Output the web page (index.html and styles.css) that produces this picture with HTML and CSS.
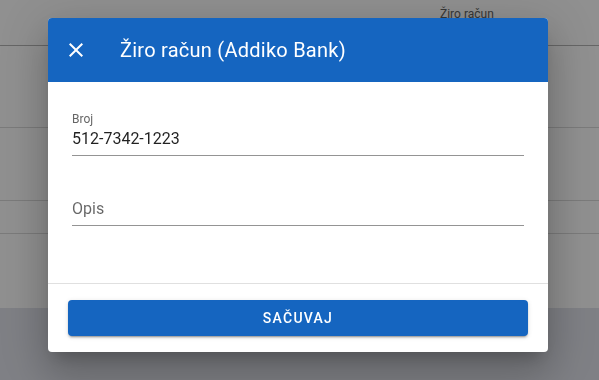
FILE: index.html
```html
<!DOCTYPE html>
<html lang="hr">
<head>
<meta charset="utf-8">
<title>Žiro račun</title>
<link rel="stylesheet" href="styles.css">
</head>
<body>
<div class="page">
  <div class="table-head">
    <span class="col-title">Žiro račun</span>
  </div>
  <div class="row row-a"></div>
  <div class="row row-b"></div>
  <div class="row row-c"></div>
  <div class="row row-d"></div>
  <div class="page-foot"></div>
</div>

<div class="overlay"></div>

<div class="dialog">
  <div class="dialog-head">
    <button class="close-btn" aria-label="Zatvori">
      <svg viewBox="0 0 24 24" width="24" height="24"><path fill="#fff" d="M19 6.41L17.59 5 12 10.59 6.41 5 5 6.41 10.59 12 5 17.59 6.41 19 12 13.41 17.59 19 19 17.59 13.41 12z"/></svg>
    </button>
    <div class="dialog-title">Žiro račun (Addiko Bank)</div>
  </div>
  <div class="dialog-body">
    <div class="field">
      <div class="field-label">Broj</div>
      <div class="field-value">512-7342-1223</div>
    </div>
    <div class="field">
      <div class="field-label"></div>
      <div class="field-value placeholder">Opis</div>
    </div>
  </div>
  <div class="dialog-foot">
    <button class="save-btn">Sačuvaj</button>
  </div>
</div>
</body>
</html>
```

FILE: styles.css
```css
* { box-sizing: border-box; }

html, body {
  margin: 0;
  padding: 0;
  width: 599px;
  height: 380px;
  overflow: hidden;
  font-family: Roboto, "Noto Sans", sans-serif;
}

.page {
  width: 599px;
  height: 380px;
  background: #eeeeee;
  display: flex;
  flex-direction: column;
}

.table-head {
  height: 46px;
  border-bottom: 1px solid #a2a2a2;
  padding-left: 440px;
  padding-top: 3px;
}

.col-title {
  font-size: 12px;
  line-height: 16px;
  color: #4a4a4a;
}

.row { border-bottom: 1px solid #c8c8c8; }
.row-a { height: 82px; }
.row-b { height: 73px; }
.row-c { height: 33px; }
.row-d { height: 74px; border-bottom: none; }

.page-foot {
  flex: 1;
  background: #d0d1db;
}

.overlay {
  position: fixed;
  inset: 0;
  background: rgba(33, 33, 33, 0.46);
}

.dialog {
  position: absolute;
  left: 48px;
  top: 18px;
  width: 500px;
  height: 334px;
  background: #fff;
  border-radius: 4px;
  overflow: hidden;
  display: flex;
  flex-direction: column;
  box-shadow: 0 11px 15px -7px rgba(0,0,0,.2), 0 24px 38px 3px rgba(0,0,0,.14), 0 9px 46px 8px rgba(0,0,0,.12);
}

.dialog-head {
  height: 64px;
  background: #1565c0;
  display: flex;
  align-items: center;
  padding-left: 16px;
  gap: 32px;
  flex-shrink: 0;
}

.close-btn {
  width: 24px;
  height: 24px;
  padding: 0;
  border: none;
  background: none;
  display: flex;
}

.dialog-title {
  color: #fff;
  font-size: 20px;
  line-height: 28px;
  font-weight: 400;
  letter-spacing: 0.25px;
}

.dialog-body {
  flex: 1;
  padding: 29px 24px 0;
  display: flex;
  flex-direction: column;
  gap: 25px;
  border-bottom: 1px solid #e0e0e0;
}

.field {
  border-bottom: 1px solid #949494;
  padding-bottom: 6px;
}

.field-label {
  height: 16px;
  font-size: 12px;
  line-height: 16px;
  color: #666;
}

.field-value {
  margin-top: 2px;
  font-size: 16px;
  line-height: 20px;
  color: rgba(0,0,0,.87);
}

.field-value.placeholder { color: rgba(0,0,0,.6); }

.dialog-foot {
  padding: 16px 20px;
  flex-shrink: 0;
}

.save-btn {
  display: block;
  width: 100%;
  height: 36px;
  border: none;
  border-radius: 4px;
  background: #1565c0;
  color: #fff;
  font-family: Roboto, "Noto Sans", sans-serif;
  font-size: 14px;
  font-weight: 500;
  letter-spacing: 1.25px;
  text-transform: uppercase;
  box-shadow: 0 3px 1px -2px rgba(0,0,0,.2), 0 2px 2px 0 rgba(0,0,0,.14), 0 1px 5px 0 rgba(0,0,0,.12);
}
```
